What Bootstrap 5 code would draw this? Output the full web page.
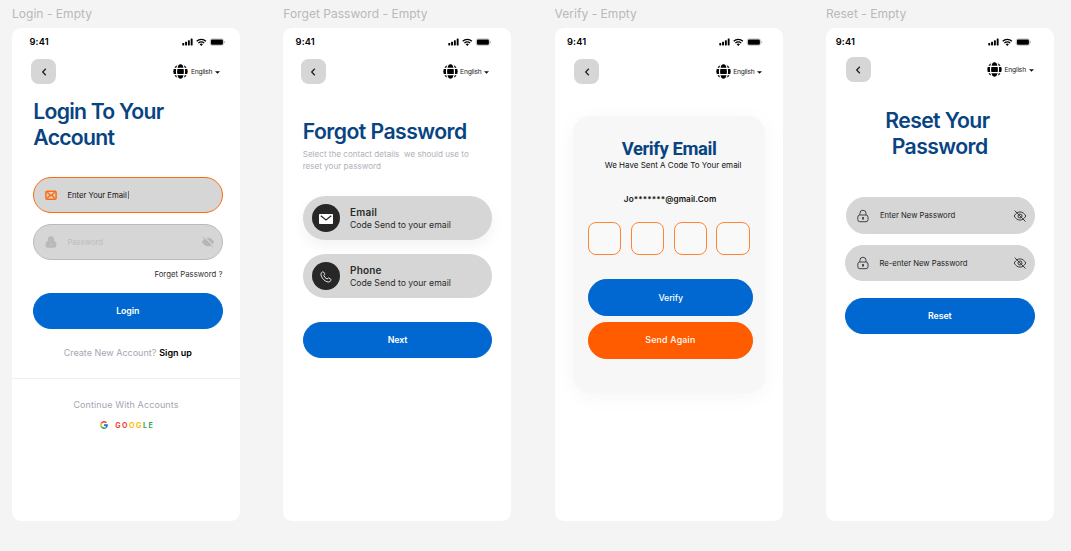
<!DOCTYPE html>
<html lang="en">
<head>
<meta charset="utf-8">
<meta name="viewport" content="width=device-width, initial-scale=1">
<title>Login flow</title>
<link href="https://cdn.jsdelivr.net/npm/bootstrap@5.3.0/dist/css/bootstrap.min.css" rel="stylesheet">
<style>
body{background:#f4f4f4;font-family:"Inter","Liberation Sans",sans-serif;color:#111;width:1071px;height:551px;overflow:hidden;line-height:1}
.board{padding-left:12px;gap:43.3px}
.frame-col{width:228px;flex:none}
.frame-label{height:28px;font-size:12px;color:#b9b9b9;letter-spacing:.03px}
.phone{height:493px;background:#fff;border-radius:9px;overflow:hidden}
.phone>*,.verify-card>*,svg{flex:none}
.phone,.frame-label{white-space:nowrap}
.status{height:28px;padding-left:17.5px;padding-right:15px}
.clock{font-size:9.3px;font-weight:600;color:#000;letter-spacing:.15px}
.status svg{width:43.5px;height:10px}
.bar-top{height:25px;margin-top:3.3px;padding-left:19.4px;padding-right:20.1px}
.back{width:25px;height:25px;border-radius:7.5px;background:#d6d6d6}
.lang span{font-size:6.7px;margin-left:2.6px;width:21.5px;color:#222;letter-spacing:-.2px;padding-top:1px}
.lang .caret{width:5px;height:3px;margin-left:2.5px;margin-top:1px}
.title{font-size:21.2px;font-weight:600;line-height:26.5px;color:#084482;margin:0;letter-spacing:-.75px}
.stack{margin-left:21px;width:189.5px}
.pill{border-radius:50rem;height:36.4px;background:#d6d6d6;border:1px solid #d6d6d6;font-size:7.7px}
.pill span{padding-top:1px}
.pill .lead-icon{width:12px;height:14px;margin-left:10.6px;margin-right:10.8px}
.pill .end-icon{width:14px;height:12px;margin-left:auto;margin-right:7px}
.btn-pill{--bs-btn-padding-y:0;--bs-btn-font-size:8.8px;--bs-btn-font-weight:600;--bs-btn-color:#fff;--bs-btn-bg:#0068d0;--bs-btn-border-color:#0068d0;--bs-btn-border-radius:50rem;height:36px;line-height:1;letter-spacing:-.1px}
.muted{color:#a5a5b2}

.p1 .title{margin:13.3px 0 0 21.3px}
.active-field{border:1.5px solid #ff6a0c;margin-top:26.4px}
.idle-field{border-color:#bababa;margin-top:10.4px;color:#bcbcbc}
.type-cursor{width:1px;height:8px;background:#777;margin-left:1.3px}
.forgot{height:12px;margin-top:8.8px;font-size:7.8px;color:#333}
.p1 .btn-pill{margin-top:12.1px}
.create{height:14px;margin-top:16.8px;font-size:9px;gap:3px;padding-left:3.4px}
.create b{letter-spacing:-.04px;font-weight:600}
.rule{height:1px;background:#efefef;margin-top:18.4px}
.continue{height:14px;margin-top:18.2px;font-size:9px;letter-spacing:.11px}
.google{height:10px;margin-top:8.8px;font-size:7.1px;font-weight:700;letter-spacing:1.55px;gap:7.5px;padding-left:2px}
.google div{padding-top:1px}
.g-red{color:#ea4335}.g-yellow{color:#fbbc05}.g-green{color:#34a853}

.p2 .status{padding-left:12.3px;padding-right:20.3px}
.p2 .bar-top{padding-left:17.3px;padding-right:22.2px}
.p2 .title{margin:33.6px 0 0 19.5px;letter-spacing:-.55px}
.p2 .stack{margin-left:19.5px}
.sub{font-size:8.1px;line-height:11.6px;color:#b0b0ba;margin:5px 0 0 19.4px}
.option{height:44px;border-radius:50rem;background:#d6d6d6;padding-left:9px;margin-top:14px}
.option-main{margin-top:23.6px;box-shadow:0 6px 14px rgba(0,0,0,.05)}
.disc{width:28px;height:28px;border-radius:50%;background:#272727}
.option-text{margin-left:10.2px;color:#2a2a2a;line-height:12.4px;padding-top:.8px}
.option-text .name{font-size:10px;font-weight:600;letter-spacing:.2px}
.option-text .desc{font-size:8.7px}
.disc .letter{margin-top:2px}
.disc .handset{margin-top:1px}
.p2 .btn-pill{margin-top:24px}

.p3 .status{padding-left:12.4px;padding-right:20px}
.p3 .bar-top{padding-left:19.5px;padding-right:20.4px}
.verify-card{width:192px;height:277px;margin:31.7px 0 0 18px;border-radius:17px;background:#f7f7f7;box-shadow:0 4px 22px rgba(0,0,0,.04)}
.verify-title{font-family:Roboto,sans-serif;font-weight:700;font-size:18.4px;line-height:20px;color:#084482;margin:23.3px 0 0;letter-spacing:-.38px;padding-left:1px}
.sent-note{font-size:8px;height:12px;padding-left:9px}
.masked{font-size:8.2px;font-weight:600;height:12px;margin-top:22px;padding-left:3px;letter-spacing:.09px}
.codes{margin:16.4px 0 0 15.2px;gap:9.5px}
.code-box{width:33.4px;height:33.6px;border:1px solid #ff8434;border-radius:8px;background:#f9f9f9}
.verify-card .btn-pill{--bs-btn-font-weight:500;width:165px;height:36.6px;margin-left:15.6px;margin-top:23.9px}
.verify-card .again{--bs-btn-bg:#ff5c00;--bs-btn-border-color:#ff5c00;margin-top:6.2px;margin-left:15.3px;letter-spacing:.2px}
.p3 .btn-pill,.p4 .btn-pill{padding-top:1px}

.p4 .status{padding-left:9.8px;padding-right:22.8px}
.p4 .bar-top{margin-top:1.2px;padding-left:19.9px;padding-right:20.4px}
.p4 .title{margin:24.5px 0 0}
.p4 .title .row-one{margin-left:-5px;letter-spacing:-.62px}
.p4 .title .row-two{margin-left:-.5px;letter-spacing:-.58px}
.p4 .pill{margin-left:19.3px;margin-top:11.1px;color:#1c1c1c}
.p4 .pill .lead-icon{margin-left:10.4px}
.p4 .pill .end-icon{margin-right:7.2px}
.p4 .pill.first{margin-top:37.7px;margin-left:19.8px}
.p4 .btn-pill{margin-left:19.2px;margin-top:16.7px}
</style>
</head>
<body>
<svg class="d-none">
<defs>
<symbol id="sys" viewBox="0 0 43.5 10"><rect x=".3" y="6" width="1.9" height="2.4" rx=".4"/><rect x="3.1" y="4.7" width="1.9" height="3.7" rx=".4"/><rect x="5.9" y="3.3" width="1.9" height="5.1" rx=".4"/><rect x="8.7" y="1.6" width="1.9" height="6.8" rx=".4"/><path d="M14.7 4.3a6.6 6.6 0 0 1 9.2 0M16.4 6.1a4.2 4.2 0 0 1 5.8 0" fill="none" stroke="#000" stroke-width="1.3"/><path d="M17.7 7.2a2.4 2.4 0 0 1 3.2 0L19.3 8.9z"/><rect x="28.2" y="1.8" width="13.4" height="6.6" rx="2" fill="none" stroke="#999" stroke-width=".5"/><rect x="28.9" y="2.4" width="12" height="5.4" rx="1.3"/><path d="M42.3 4v2.3q.9-.4.9-1.15T42.3 4z" fill="#999"/></symbol>
<symbol id="chev" viewBox="0 0 8 10"><path d="M5.8 1.7 2.7 5l3.1 3.3" fill="none" stroke="#222" stroke-width="1.3"/></symbol>
<symbol id="globe" viewBox="0 0 15 15"><circle cx="7.5" cy="7.5" r="7.2"/><path d="M0 4.3h15M0 10.7h15" stroke="#fff" stroke-width="1.2"/><ellipse cx="7.5" cy="7.5" rx="4" ry="8.5" fill="none" stroke="#fff" stroke-width="1.2"/></symbol>
<symbol id="caret" viewBox="0 0 5 3"><path d="M0 .2h5L2.5 2.8z" fill="#111"/></symbol>
<symbol id="mail" viewBox="0 0 12 14"><rect x=".9" y="3.2" width="10.2" height="8" rx="1.2" fill="#d6d6d6" stroke="#ff6a0c" stroke-width="1.5"/><path d="M2.2 4.3 6 7.8l3.800-3.500M2.200 10.300 5 7.200M9.800 10.300 7 7.200" fill="none" stroke="#ff6a0c" stroke-width="1.400"/></symbol>
<symbol id="lock-solid" viewBox="0 0 12 14"><path d="M2.900 6V4.400a3.100 3.100 0 0 1 6.200 0V6q2.300.4 2.300 2.800v1.700q0 2.300-2.600 2.300H3.200Q.6 12.800.6 10.500V8.800Q.6 6.400 2.900 6z" fill="#b9b9b9"/><path d="M6 8.600v2" stroke="#d0d0d0" stroke-width=".8"/></symbol>
<symbol id="eye-solid" viewBox="0 0 14 12"><path d="M1 6C2.600 3 4.700 1.700 7 1.700S11.400 3 13 6c-1.600 3-3.700 4.300-6 4.300S2.600 9 1 6z" fill="#b6b6b6"/><path d="M2.300 0l11 10.500" stroke="#d6d6d6" stroke-width="1.100"/><path d="M1.300.9l11 10.600" stroke="#b6b6b6" stroke-width=".9"/></symbol>
<symbol id="lock" viewBox="0 0 12 14"><g fill="none" stroke="#333" stroke-width=".9"><rect x=".8" y="6" width="10.200" height="6.700" rx="2"/><path d="M2.900 6V4.300a3 3 0 0 1 6.100 0V6M6 8.600v2.400"/></g><circle cx="6" cy="9" r="1" fill="#333"/></symbol>
<symbol id="eye" viewBox="0 0 14 12"><g fill="none" stroke="#333" stroke-width=".95"><path d="M1.200 6C2.600 3.400 4.700 1.900 7 1.900s4.400 1.500 5.800 4.100C11.400 8.600 9.300 10.100 7 10.100S2.600 8.600 1.200 6z"/><circle cx="7" cy="6" r="2"/><path d="M1.700.6l10.800 10.900"/></g></symbol>
<symbol id="g" viewBox="0 0 8 8"><g fill="none" stroke-width="1.600"><path d="M6.400 1.800A3.100 3.100 0 0 0 1.300 2.500" stroke="#ea4335"/><path d="M1.300 2.500a3.100 3.100 0 0 0 0 3" stroke="#fbbc05"/><path d="M1.300 5.500a3.100 3.100 0 0 0 4.700 1" stroke="#34a853"/><path d="M6 6.500A3 3 0 0 0 7.100 4.100H4" stroke="#1a73e8"/></g></symbol>
</defs>
</svg>

<main class="board d-flex">
<section class="frame-col p1">
 <div class="frame-label d-flex align-items-center">Login - Empty</div>
 <div class="phone d-flex flex-column">
  <div class="status d-flex align-items-center justify-content-between"><span class="clock">9:41</span><svg><use href="#sys"/></svg></div>
  <div class="bar-top d-flex align-items-center justify-content-between">
   <div class="back d-flex align-items-center justify-content-center"><svg width="8" height="10"><use href="#chev"/></svg></div>
   <div class="lang d-flex align-items-center"><svg width="15" height="15"><use href="#globe"/></svg><span>English</span><svg class="caret"><use href="#caret"/></svg></div>
  </div>
  <h1 class="title">Login To Your<br>Account</h1>
  <div class="stack pill active-field d-flex align-items-center"><svg class="lead-icon"><use href="#mail"/></svg><span>Enter Your Email</span><i class="type-cursor"></i></div>
  <div class="stack pill idle-field d-flex align-items-center"><svg class="lead-icon"><use href="#lock-solid"/></svg><span>Password</span><svg class="end-icon"><use href="#eye-solid"/></svg></div>
  <div class="stack forgot d-flex align-items-center justify-content-end">Forget Password ?</div>
  <button class="btn btn-pill stack">Login</button>
  <div class="create muted d-flex align-items-center justify-content-center"><span>Create New Account?</span><b class="text-black">Sign up</b></div>
  <div class="rule"></div>
  <div class="continue muted d-flex align-items-center justify-content-center">Continue With Accounts</div>
  <div class="google d-flex align-items-center justify-content-center"><svg width="8" height="8"><use href="#g"/></svg><div><span class="g-red">GO</span><span class="g-yellow">OG</span><span class="g-green">LE</span></div></div>
 </div>
</section>

<section class="frame-col p2">
 <div class="frame-label d-flex align-items-center">Forget Password - Empty</div>
 <div class="phone d-flex flex-column">
  <div class="status d-flex align-items-center justify-content-between"><span class="clock">9:41</span><svg><use href="#sys"/></svg></div>
  <div class="bar-top d-flex align-items-center justify-content-between">
   <div class="back d-flex align-items-center justify-content-center"><svg width="8" height="10"><use href="#chev"/></svg></div>
   <div class="lang d-flex align-items-center"><svg width="15" height="15"><use href="#globe"/></svg><span>English</span><svg class="caret"><use href="#caret"/></svg></div>
  </div>
  <h1 class="title">Forgot Password</h1>
  <div class="sub">Select the contact details&nbsp; we should use to<br>reset your password</div>
  <div class="stack option option-main d-flex align-items-center">
   <div class="disc d-flex align-items-center justify-content-center"><svg class="letter" width="14" height="10" viewBox="0 0 14 10"><rect width="14" height="10" rx=".8" fill="#fff"/><path d="M1.800 1.700 7 6l5.200-4.300" fill="none" stroke="#272727" stroke-width="1.200"/></svg></div>
   <div class="option-text"><div class="name">Email</div><div class="desc">Code Send to your email</div></div>
  </div>
  <div class="stack option d-flex align-items-center">
   <div class="disc d-flex align-items-center justify-content-center"><svg class="handset" width="12" height="12" viewBox="0 0 12 12"><path d="M1.100 2.200 2.500.9q.6-.4 1 .1l1.200 1.600q.3.5-.1 1l-.8.9q.9 2.300 3.300 3.500l1-.8q.5-.4 1-.1l1.700 1.200q.5.500.1 1l-1.200 1.500C6.300 12.200-.1 6.400 1.100 2.200z" fill="none" stroke="#fff" stroke-width=".9"/></svg></div>
   <div class="option-text"><div class="name">Phone</div><div class="desc">Code Send to your email</div></div>
  </div>
  <button class="btn btn-pill stack">Next</button>
 </div>
</section>

<section class="frame-col p3">
 <div class="frame-label d-flex align-items-center">Verify - Empty</div>
 <div class="phone d-flex flex-column">
  <div class="status d-flex align-items-center justify-content-between"><span class="clock">9:41</span><svg><use href="#sys"/></svg></div>
  <div class="bar-top d-flex align-items-center justify-content-between">
   <div class="back d-flex align-items-center justify-content-center"><svg width="8" height="10"><use href="#chev"/></svg></div>
   <div class="lang d-flex align-items-center"><svg width="15" height="15"><use href="#globe"/></svg><span>English</span><svg class="caret"><use href="#caret"/></svg></div>
  </div>
  <div class="verify-card d-flex flex-column">
   <h1 class="verify-title text-center">Verify Email</h1>
   <div class="sent-note d-flex align-items-center justify-content-center">We Have Sent A Code To Your email</div>
   <div class="masked d-flex align-items-center justify-content-center">Jo*******@gmail.Com</div>
   <div class="codes d-flex"><div class="code-box"></div><div class="code-box"></div><div class="code-box"></div><div class="code-box"></div></div>
   <button class="btn btn-pill">Verify</button>
   <button class="btn btn-pill again">Send Again</button>
  </div>
 </div>
</section>

<section class="frame-col p4">
 <div class="frame-label d-flex align-items-center">Reset - Empty</div>
 <div class="phone d-flex flex-column">
  <div class="status d-flex align-items-center justify-content-between"><span class="clock">9:41</span><svg><use href="#sys"/></svg></div>
  <div class="bar-top d-flex align-items-center justify-content-between">
   <div class="back d-flex align-items-center justify-content-center"><svg width="8" height="10"><use href="#chev"/></svg></div>
   <div class="lang d-flex align-items-center"><svg width="15" height="15"><use href="#globe"/></svg><span>English</span><svg class="caret"><use href="#caret"/></svg></div>
  </div>
  <h1 class="title text-center"><span class="row-one">Reset Your</span><br><span class="row-two">Password</span></h1>
  <div class="stack pill first d-flex align-items-center"><svg class="lead-icon"><use href="#lock"/></svg><span>Enter New Password</span><svg class="end-icon"><use href="#eye"/></svg></div>
  <div class="stack pill d-flex align-items-center"><svg class="lead-icon"><use href="#lock"/></svg><span>Re-enter New Password</span><svg class="end-icon"><use href="#eye"/></svg></div>
  <button class="btn btn-pill stack">Reset</button>
 </div>
</section>
</main>
<script src="https://cdn.jsdelivr.net/npm/bootstrap@5.3.0/dist/js/bootstrap.bundle.min.js"></script>
</body>
</html>
